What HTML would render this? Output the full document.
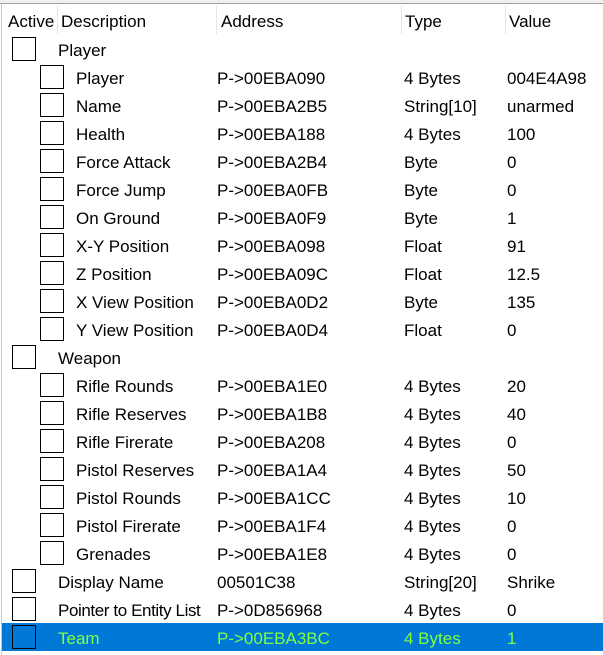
<!DOCTYPE html><html><head><style>
body{margin:0;width:603px;height:655px;background:#fff;font-family:"Liberation Sans",sans-serif;font-size:17px;color:#000;position:relative;overflow:hidden}
.top{position:absolute;left:0;top:0;width:603px;height:3px;background:#f0f0f0;border-bottom:1px solid #a0a0a0}
.lb{position:absolute;left:1px;top:4px;width:1px;height:651px;background:#c8c8c8}
.h{position:absolute;top:12px}
.sep{position:absolute;top:6px;width:1px;height:28px;background:#e5e5e5}
.r{position:absolute;left:2px;width:601px;height:28px}
.r span{position:absolute;top:6px;white-space:nowrap}
.b{position:absolute;top:2px;width:24px;height:24px;border:1px solid #000;box-sizing:border-box;background:#fff}
.sel{background:#0078d7;color:#80ff40}
.sel .b{background:#0078d7}
</style></head><body>
<div class="top"></div><div class="lb"></div>
<span class="h" style="left:8px">Active</span><div class="sep" style="left:57px"></div>
<span class="h" style="left:61px">Description</span><div class="sep" style="left:216px"></div>
<span class="h" style="left:221px">Address</span><div class="sep" style="left:401px"></div>
<span class="h" style="left:405px">Type</span><div class="sep" style="left:505px"></div>
<span class="h" style="left:509px">Value</span>
<div class="r" style="top:35px"><div class="b" style="left:10px"></div><span style="left:56px">Player</span></div>
<div class="r" style="top:63px"><div class="b" style="left:38px"></div><span style="left:74px">Player</span><span style="left:215px">P-&gt;00EBA090</span><span style="left:402px">4 Bytes</span><span style="left:505px">004E4A98</span></div>
<div class="r" style="top:91px"><div class="b" style="left:38px"></div><span style="left:74px">Name</span><span style="left:215px">P-&gt;00EBA2B5</span><span style="left:402px">String[10]</span><span style="left:505px">unarmed</span></div>
<div class="r" style="top:119px"><div class="b" style="left:38px"></div><span style="left:74px">Health</span><span style="left:215px">P-&gt;00EBA188</span><span style="left:402px">4 Bytes</span><span style="left:505px">100</span></div>
<div class="r" style="top:147px"><div class="b" style="left:38px"></div><span style="left:74px">Force Attack</span><span style="left:215px">P-&gt;00EBA2B4</span><span style="left:402px">Byte</span><span style="left:505px">0</span></div>
<div class="r" style="top:175px"><div class="b" style="left:38px"></div><span style="left:74px">Force Jump</span><span style="left:215px">P-&gt;00EBA0FB</span><span style="left:402px">Byte</span><span style="left:505px">0</span></div>
<div class="r" style="top:203px"><div class="b" style="left:38px"></div><span style="left:74px">On Ground</span><span style="left:215px">P-&gt;00EBA0F9</span><span style="left:402px">Byte</span><span style="left:505px">1</span></div>
<div class="r" style="top:231px"><div class="b" style="left:38px"></div><span style="left:74px">X-Y Position</span><span style="left:215px">P-&gt;00EBA098</span><span style="left:402px">Float</span><span style="left:505px">91</span></div>
<div class="r" style="top:259px"><div class="b" style="left:38px"></div><span style="left:74px">Z Position</span><span style="left:215px">P-&gt;00EBA09C</span><span style="left:402px">Float</span><span style="left:505px">12.5</span></div>
<div class="r" style="top:287px"><div class="b" style="left:38px"></div><span style="left:74px">X View Position</span><span style="left:215px">P-&gt;00EBA0D2</span><span style="left:402px">Byte</span><span style="left:505px">135</span></div>
<div class="r" style="top:315px"><div class="b" style="left:38px"></div><span style="left:74px">Y View Position</span><span style="left:215px">P-&gt;00EBA0D4</span><span style="left:402px">Float</span><span style="left:505px">0</span></div>
<div class="r" style="top:343px"><div class="b" style="left:10px"></div><span style="left:56px">Weapon</span></div>
<div class="r" style="top:371px"><div class="b" style="left:38px"></div><span style="left:74px">Rifle Rounds</span><span style="left:215px">P-&gt;00EBA1E0</span><span style="left:402px">4 Bytes</span><span style="left:505px">20</span></div>
<div class="r" style="top:399px"><div class="b" style="left:38px"></div><span style="left:74px">Rifle Reserves</span><span style="left:215px">P-&gt;00EBA1B8</span><span style="left:402px">4 Bytes</span><span style="left:505px">40</span></div>
<div class="r" style="top:427px"><div class="b" style="left:38px"></div><span style="left:74px">Rifle Firerate</span><span style="left:215px">P-&gt;00EBA208</span><span style="left:402px">4 Bytes</span><span style="left:505px">0</span></div>
<div class="r" style="top:455px"><div class="b" style="left:38px"></div><span style="left:74px">Pistol Reserves</span><span style="left:215px">P-&gt;00EBA1A4</span><span style="left:402px">4 Bytes</span><span style="left:505px">50</span></div>
<div class="r" style="top:483px"><div class="b" style="left:38px"></div><span style="left:74px">Pistol Rounds</span><span style="left:215px">P-&gt;00EBA1CC</span><span style="left:402px">4 Bytes</span><span style="left:505px">10</span></div>
<div class="r" style="top:511px"><div class="b" style="left:38px"></div><span style="left:74px">Pistol Firerate</span><span style="left:215px">P-&gt;00EBA1F4</span><span style="left:402px">4 Bytes</span><span style="left:505px">0</span></div>
<div class="r" style="top:539px"><div class="b" style="left:38px"></div><span style="left:74px">Grenades</span><span style="left:215px">P-&gt;00EBA1E8</span><span style="left:402px">4 Bytes</span><span style="left:505px">0</span></div>
<div class="r" style="top:567px"><div class="b" style="left:10px"></div><span style="left:56px">Display Name</span><span style="left:215px">00501C38</span><span style="left:402px">String[20]</span><span style="left:505px">Shrike</span></div>
<div class="r" style="top:595px"><div class="b" style="left:10px"></div><span style="left:56px;letter-spacing:-0.4px">Pointer to Entity List</span><span style="left:215px">P-&gt;0D856968</span><span style="left:402px">4 Bytes</span><span style="left:505px">0</span></div>
<div class="r sel" style="top:623px"><div class="b" style="left:10px"></div><span style="left:56px">Team</span><span style="left:215px">P-&gt;00EBA3BC</span><span style="left:402px">4 Bytes</span><span style="left:505px">1</span></div>
</body></html>
